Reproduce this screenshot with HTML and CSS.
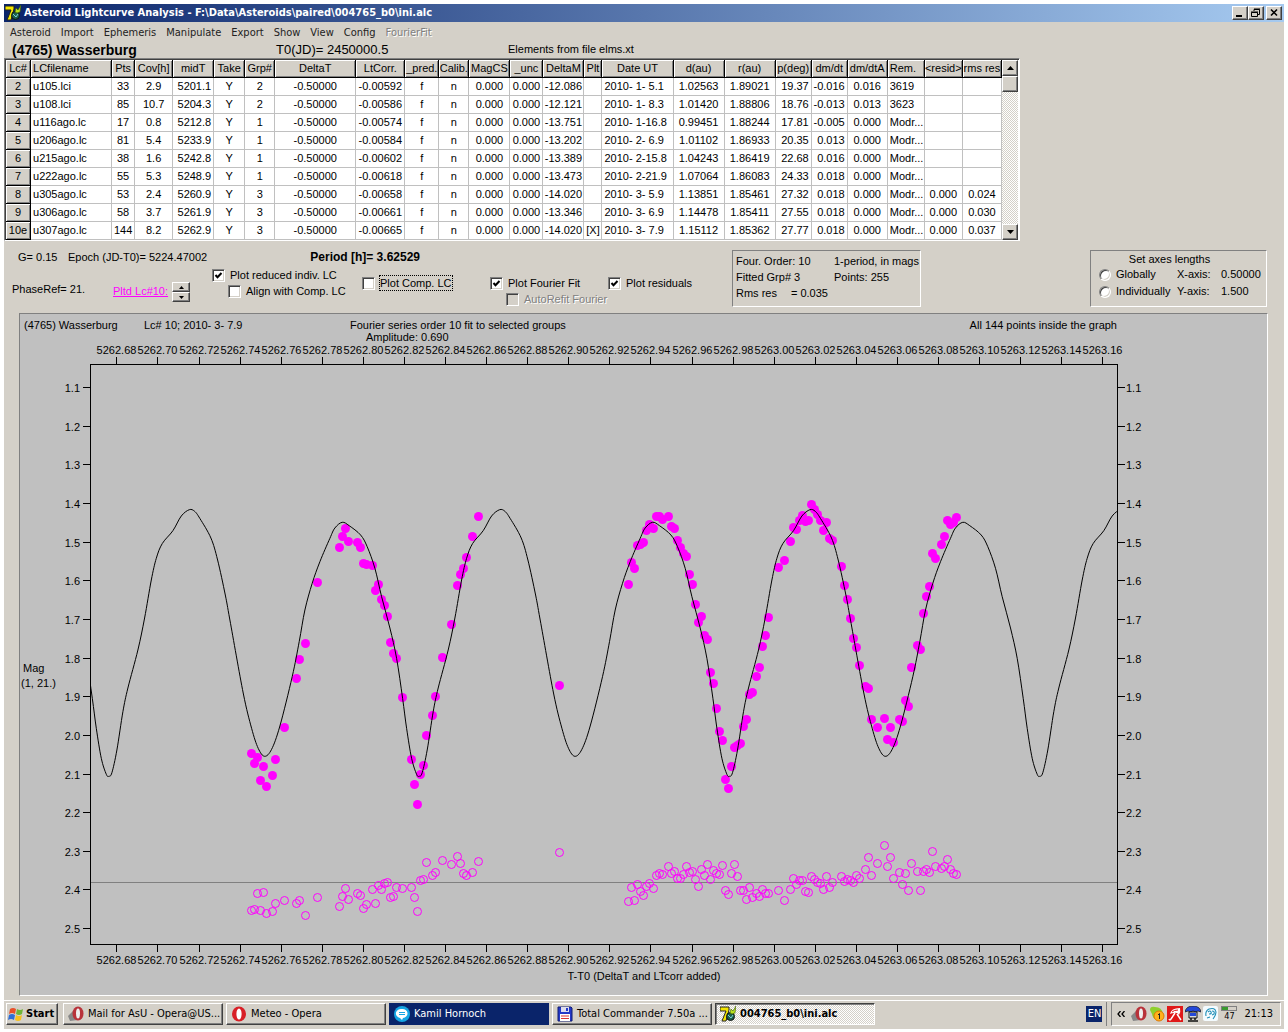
FILE: index.html
```
<!DOCTYPE html>
<html lang="en">
<head>
    <meta charset="UTF-8">
    <meta name="viewport" content="width=device-width, initial-scale=1.0">
    <title>Asteroid Lightcurve Analysis</title>
    <link rel="stylesheet" href="styles.css">
</head>
<body>
    <!-- Shared icons -->
    <svg class="defs" width="0" height="0">
        <symbol id="ic-app" viewBox="0 0 16 16">
            <path d="M0 1h9v3L6 15H2L6 5H0z" fill="#f4e600" stroke="#222" stroke-width="1"/>
            <circle cx="10.500" cy="10.500" r="4" fill="#1b5e4b" stroke="#111"/>
            <path d="M8 9l3 3 2-3" fill="none" stroke="#7fd0d8"/>
            <path d="M10 7l1-4 2 2 3-5-1 7-3 1z" fill="#b6e020" stroke="#3a5a00" stroke-width=".6"/>
        </symbol>
        <symbol id="ic-opera" viewBox="0 0 16 16">
            <ellipse cx="8" cy="8" rx="7" ry="7.500" fill="#d81f26"/>
            <ellipse cx="8" cy="8" rx="2.600" ry="5.500" fill="#fff"/>
        </symbol>
        <symbol id="ic-mail" viewBox="0 0 16 16">
            <path d="M0 10l5-5 5 9-8 1z" fill="#888"/>
            <ellipse cx="10" cy="7.500" rx="5.500" ry="7" fill="#b8323a"/>
            <ellipse cx="10" cy="7.500" rx="2" ry="5" fill="#eee"/>
        </symbol>
    </svg>

    <div class="window">
        <header class="titlebar">
            <svg class="icon"><use href="#ic-app"/></svg>
            <h1>Asteroid Lightcurve Analysis - F:\Data\Asteroids\paired\004765_b0\ini.alc</h1>
            <div class="win-buttons">
                <button type="button" aria-label="Minimize"><svg viewBox="0 0 12 10"><path d="M2 8h6" stroke="#000" stroke-width="2"/></svg></button>
                <button type="button" aria-label="Restore"><svg viewBox="0 0 12 10"><path d="M4 3V1.500h5.500v5H8M4 1h6M1.500 4.500h6v4h-6zM1 4h7" fill="none" stroke="#000"/></svg></button>
                <button type="button" class="close" aria-label="Close"><svg viewBox="0 0 12 10"><path d="M3 1.500l6 6M9 1.500l-6 6" stroke="#000" stroke-width="1.600"/></svg></button>
            </div>
        </header>

        <nav class="menu">
            <button type="button">Asteroid</button>
            <button type="button">Import</button>
            <button type="button">Ephemeris</button>
            <button type="button">Manipulate</button>
            <button type="button">Export</button>
            <button type="button">Show</button>
            <button type="button">View</button>
            <button type="button">Config</button>
            <button type="button" disabled>FourierFit</button>
        </nav>

        <div class="info">
            <b>(4765) Wasserburg</b>
            <span class="epoch">T0(JD)= 2450000.5</span>
            <span class="elements">Elements from file elms.xt</span>
        </div>

        <div class="grid">
            <table id="lc-table">
                <colgroup>
                    <col class="w25"><col class="w81"><col class="w23"><col class="w38"><col class="w41"><col class="w31">
                    <col class="w30"><col class="w81"><col class="w49"><col class="w34"><col class="w30"><col class="w41">
                    <col class="w33"><col class="w41"><col class="w18"><col class="w71"><col class="w51"><col class="w51">
                    <col class="w36"><col class="w36"><col class="w40"><col class="w37"><col class="w38"><col class="w39">
                </colgroup>
                <thead>
                    <tr><th>Lc#</th><th class="left">LCfilename</th><th>Pts</th><th>Cov[h]</th><th>midT</th><th>Take</th><th>Grp#</th><th>DeltaT</th><th>LtCorr.</th><th>_pred.</th><th>Calib.</th><th>MagCS</th><th>_unc</th><th>DeltaM</th><th>Plt</th><th>Date UT</th><th>d(au)</th><th>r(au)</th><th>p(deg)</th><th>dm/dt</th><th>dm/dtA</th><th class="left">Rem.</th><th>&lt;resid&gt;</th><th>rms res</th></tr>
                </thead>
                <tbody></tbody>
            </table>
            <div class="scroll">
                <button type="button" aria-label="Scroll up"><svg viewBox="0 0 7 4"><path d="M0 4l3.500-4L7 4z"/></svg></button>
                <div class="thumb"></div>
                <button type="button" class="down" aria-label="Scroll down"><svg viewBox="0 0 7 4"><path d="M0 0l3.500 4L7 0z"/></svg></button>
            </div>
        </div>

        <form class="controls">
            <div class="params">
                <div class="line">
                    <span class="g">G= 0.15</span>
                    <span>Epoch (JD-T0)= 5224.47002</span>
                    <b>Period [h]= 3.62529</b>
                </div>
                <div class="line options">
                    <span class="phase">PhaseRef= 21.</span>
                    <a href="#chart" class="plotted">Pltd Lc#10:</a>
                    <div class="spin">
                        <button type="button" aria-label="Next"><svg viewBox="0 0 5 3"><path d="M0 3l2.500-3L5 3z"/></svg></button>
                        <button type="button" aria-label="Previous"><svg viewBox="0 0 5 3"><path d="M0 0l2.500 3L5 0z"/></svg></button>
                    </div>
                    <div class="checks">
                        <label><input type="checkbox" checked>Plot reduced indiv. LC</label>
                        <label class="sub"><input type="checkbox">Align with Comp. LC</label>
                    </div>
                    <div class="checks low">
                        <label><input type="checkbox"><span class="focused">Plot Comp. LC</span></label>
                    </div>
                </div>
            </div>
            <div class="checks fit">
                <label><input type="checkbox" checked>Plot Fourier Fit</label>
                <label class="sub off"><input type="checkbox" disabled>AutoRefit Fourier</label>
            </div>
            <div class="checks fit">
                <label><input type="checkbox" checked>Plot residuals</label>
            </div>
            <div class="box fourier">
                <span>Four. Order: 10</span><span>1-period, in mags</span>
                <span>Fitted Grp# 3</span><span>Points: 255</span>
                <span class="rms"><span>Rms res</span><span>= 0.035</span></span>
            </div>
            <fieldset class="box axes">
                <div class="caption">Set axes lengths</div>
                <label><input type="radio" name="axes">Globally</label><span>X-axis:</span><span>0.50000</span>
                <label><input type="radio" name="axes">Individually</label><span>Y-axis:</span><span>1.500</span>
            </fieldset>
        </form>

        <main class="chart">
            <svg id="chart" viewBox="20 314 1247 681">
                <text x="24" y="329">(4765) Wasserburg</text>
                <text x="144" y="329">Lc# 10; 2010- 3- 7.9</text>
                <text x="350" y="329">Fourier series order 10 fit to selected groups</text>
                <text x="366" y="341">Amplitude: 0.690</text>
                <text x="1117" y="329" class="end">All 144 points inside the graph</text>
                <text x="23" y="672">Mag</text>
                <text x="21" y="687">(1, 21.)</text>
                <text x="644" y="980" class="mid">T-T0 (DeltaT and LTcorr added)</text>
                <clipPath id="plot-area"><rect x="91" y="365" width="1026" height="579"/></clipPath>
                <path class="zero" d="M91 882.500H1117"/>
                <rect class="frame" x="90.500" y="364.500" width="1027" height="580"/>
                <g id="ticks"></g>
                <g id="points"></g>
                <path id="curve" clip-path="url(#plot-area)"/>
            </svg>
        </main>

        <footer class="taskbar">
            <button type="button" class="start">
                <svg class="icon" viewBox="0 0 16 16"><path d="M2 3q3-2 6 0L7 8q-3-2-6 0z" fill="#e8502a"/><path d="M9 3q3 2 6 0l-1 5q-3 2-6 0z" fill="#6fb536"/><path d="M1 9q3-2 6 0l-1 5q-3-2-6 0z" fill="#2f6fd6"/><path d="M8 9q3 2 6 0l-1 5q-3 2-6 0z" fill="#f7c11e"/></svg>
                Start
            </button>
            <button type="button" class="task"><svg class="icon"><use href="#ic-mail"/></svg>Mail for AsU - Opera@US...</button>
            <button type="button" class="task"><svg class="icon"><use href="#ic-opera"/></svg>Meteo - Opera</button>
            <button type="button" class="task flash"><svg class="icon" viewBox="0 0 16 16"><circle cx="8" cy="8" r="8" fill="#16a5e3"/><path d="M8 3a5 4.500 0 0 1 1 9l-1 2-2-2a5 4.500 0 0 1 2-9z" fill="#fff"/><path d="M5 6.500h6M5 8.500h6" stroke="#16a5e3"/></svg>Kamil Hornoch</button>
            <button type="button" class="task"><svg class="icon" viewBox="0 0 16 16"><path d="M1 1h13l1 1v13H1z" fill="#2438c8" stroke="#101c70"/><path d="M4 1h8v5H4z" fill="#dde"/><path d="M9 2h2v3H9z" fill="#2438c8"/><path d="M3 8h10v7H3z" fill="#fff"/><path d="M4 10h8M4 12.500h8" stroke="#d33"/></svg>Total Commander 7.50a ...</button>
            <button type="button" class="task active"><svg class="icon"><use href="#ic-app"/></svg>004765_b0\ini.alc</button>
            <span class="lang">EN</span>
            <div class="tray">
                <svg class="arrows" viewBox="0 0 8 6"><path d="M3.500 0L1 3l2.500 3M7.500 0L5 3l2.500 3" fill="none" stroke="#000" stroke-width="1.300"/></svg>
                <svg class="icon"><use href="#ic-mail"/></svg>
                <svg class="icon" viewBox="0 0 16 16"><path d="M1 4q0-4 5-3 7 0 8 7l-2 6q-8 1-9-6z" fill="#8fcf2c"/><circle cx="10" cy="10" r="5" fill="#ffb21c" stroke="#e07800"/><path d="M9 9l1.500-1.500V13" fill="none" stroke="#222"/></svg>
                <svg class="icon" viewBox="0 0 16 16"><path d="M0 0h16v16H0z" fill="#e01818"/><path d="M3 8Q4 2 13 2q1 4-1 7-2-3-5-2-2 0-4 1z" fill="#fff"/><path d="M5 6q2-2 6-2" fill="none" stroke="#e01818"/><path d="M8 7l-4 6q-1 2-2 0M10 8l4 6" fill="none" stroke="#fff" stroke-width="1.500"/></svg>
                <svg class="icon" viewBox="0 0 16 16"><path d="M0 6q1-6 8-6t8 6l-3-1-2 1-3-1-3 1-2-1z" fill="#2448d8" stroke="#111" stroke-width=".7"/><path d="M4 6h8v6H4z" fill="#ddd" stroke="#111"/><path d="M5 7h6v3H5z" fill="#2448d8"/><path d="M6 12v2M10 12v2M3 15h10" stroke="#111" stroke-width="1.500"/></svg>
                <svg class="icon" viewBox="0 0 16 16"><rect width="15" height="15" rx="2" fill="#f4fbfe"/><path d="M3 10q-1-5 3-7 6-2 7 3 0 3-3 7M5 6q2-2 3 0t-2 2M9 5q3 0 2 3l-2 1M4 12l3-1" fill="none" stroke="#2290b8" stroke-width="1.100"/></svg>
                <div class="meter"><meter min="0" max="100" value="45" aria-label="Level"></meter><span>47</span></div>
                <time>21:13</time>
            </div>
        </footer>
    </div>

    <script>
    // Lightcurve list, cells separated by |
    const rows = [
        "2|u105.lci|33|2.9|5201.1|Y|2|-0.50000|-0.00592|f|n|0.000|0.000|-12.086||2010- 1- 5.1|1.02563|1.89021|19.37|-0.016|0.016|3619||",
        "3|u108.lci|85|10.7|5204.3|Y|2|-0.50000|-0.00586|f|n|0.000|0.000|-12.121||2010- 1- 8.3|1.01420|1.88806|18.76|-0.013|0.013|3623||",
        "4|u116ago.lc|17|0.8|5212.8|Y|1|-0.50000|-0.00574|f|n|0.000|0.000|-13.751||2010- 1-16.8|0.99451|1.88244|17.81|-0.005|0.000|Modr...||",
        "5|u206ago.lc|81|5.4|5233.9|Y|1|-0.50000|-0.00584|f|n|0.000|0.000|-13.202||2010- 2- 6.9|1.01102|1.86933|20.35|0.013|0.000|Modr...||",
        "6|u215ago.lc|38|1.6|5242.8|Y|1|-0.50000|-0.00602|f|n|0.000|0.000|-13.389||2010- 2-15.8|1.04243|1.86419|22.68|0.016|0.000|Modr...||",
        "7|u222ago.lc|55|5.3|5248.9|Y|1|-0.50000|-0.00618|f|n|0.000|0.000|-13.473||2010- 2-21.9|1.07064|1.86083|24.33|0.018|0.000|Modr...||",
        "8|u305ago.lc|53|2.4|5260.9|Y|3|-0.50000|-0.00658|f|n|0.000|0.000|-14.020||2010- 3- 5.9|1.13851|1.85461|27.32|0.018|0.000|Modr...|0.000|0.024",
        "9|u306ago.lc|58|3.7|5261.9|Y|3|-0.50000|-0.00661|f|n|0.000|0.000|-13.346||2010- 3- 6.9|1.14478|1.85411|27.55|0.018|0.000|Modr...|0.000|0.030",
        "10e|u307ago.lc|144|8.2|5262.9|Y|3|-0.50000|-0.00665|f|n|0.000|0.000|-14.020|[X]|2010- 3- 7.9|1.15112|1.85362|27.77|0.018|0.000|Modr...|0.000|0.037"
    ];
    const leftCols = [1, 15, 21];
    const rightCols = [4, 18, 19];
    const tbody = document.querySelector('#lc-table tbody');
    rows.forEach(row => {
        const tr = tbody.insertRow();
        row.split('|').forEach((value, i) => {
            const cell = document.createElement(i === 0 ? 'th' : 'td');
            cell.textContent = value;
            if (leftCols.includes(i)) cell.className = 'left';
            if (rightCols.includes(i)) cell.className = 'right';
            tr.appendChild(cell);
        });
    });

    // SVG helper
    function add(parent, name, attrs, text) {
        const el = document.createElementNS('http://www.w3.org/2000/svg', name);
        for (const key in attrs) el.setAttribute(key, attrs[key]);
        if (text) el.textContent = text;
        parent.appendChild(el);
    }

    // Axis ticks and labels
    const ticks = document.getElementById('ticks');
    for (let i = 0; i <= 24; i++) {
        const x = Math.round(116.4 + i * 41.08) + 0.5;
        const label = (5262.68 + i * 0.02).toFixed(2);
        add(ticks, 'path', { d: `M${x} 357V364M${x} 945V952` });
        add(ticks, 'text', { x: x, y: 354, class: 'mid' }, label);
        add(ticks, 'text', { x: x, y: 964, class: 'mid' }, label);
    }
    for (let i = 0; i <= 14; i++) {
        const y = Math.round(387 + i * 38.65) + 0.5;
        const label = (1.1 + i * 0.1).toFixed(1);
        add(ticks, 'path', { d: `M83 ${y}H90M1118 ${y}H1125` });
        add(ticks, 'text', { x: 80, y: y + 4, class: 'end' }, label);
        add(ticks, 'text', { x: 1126, y: y + 4 }, label);
    }

    // Measurements: x, magnitude, residual
    const data = [
        [251,753,910],[254,763,909],[257,757,893],[260,780,910],[263,766,892],[266,786,913],[272,775,911],[275,759,903],
        [284,727,900],[296,678,903],[299,659,900],[305,643,915],[317,582,897],[339,547,906],[342,536,896],[345,528,888],
        [348,541,899],[357,542,893],[360,547,895],[363,563,908],[366,564,904],[372,565,889],[375,590,903],[378,584,885],
        [381,599,889],[384,605,883],[387,616,882],[390,642,897],[393,653,896],[396,658,887],[402,697,888],[411,759,887],
        [414,784,897],[417,804,911],[420,774,880],[423,765,879],[426,735,862],[432,715,875],[435,696,872],[442,657,860],
        [451,624,864],[457,585,856],[460,574,863],[463,568,873],[466,557,875],[472,536,872],[478,516,861],[559,685,852],
        [628,584,901],[631,562,887],[634,568,900],[637,545,884],[640,544,891],[643,542,895],[646,530,886],[649,524,883],
        [653,528,888],[656,516,875],[659,516,873],[662,519,874],[668,516,866],[671,526,873],[674,528,871],[677,540,878],
        [680,547,878],[683,553,874],[686,556,866],[689,574,872],[692,584,871],[695,604,879],[698,622,886],[701,616,869],
        [704,635,875],[707,639,864],[710,672,879],[713,683,870],[716,708,873],[719,731,874],[722,740,865],[725,779,890],
        [728,788,894],[731,766,873],[734,747,864],[737,745,876],[740,743,890],[743,726,890],[746,719,899],[749,694,887],
        [752,692,897],[756,676,893],[759,667,896],[762,646,889],[765,635,893],[768,617,893],[778,567,890],[784,560,900],
        [790,541,889],[793,527,878],[796,529,884],[799,520,880],[802,515,880],[805,521,891],[808,520,892],[811,504,876],
        [814,509,879],[817,514,882],[820,520,883],[823,530,889],[826,522,876],[829,538,887],[832,540,882],[841,566,876],
        [844,585,881],[847,599,879],[850,618,880],[853,638,882],[856,647,875],[859,665,878],[865,686,869],[868,688,857],
        [871,719,875],[877,727,863],[884,718,845],[887,739,866],[890,727,857],[893,742,878],[899,719,872],[902,721,884],
        [905,700,873],[908,706,890],[911,667,863],[917,645,871],[920,649,890],[923,613,871],[926,596,869],[929,586,872],
        [932,553,851],[935,558,866],[941,544,868],[944,536,866],[947,520,859],[950,524,869],[953,522,873],[956,517,874]
    ];
    const points = document.getElementById('points');
    data.forEach(([x, mag, res]) => {
        add(points, 'circle', { cx: x + 0.5, cy: mag + 0.5, r: 4.5, class: 'obs' });
        add(points, 'circle', { cx: x + 0.5, cy: res + 0.5, r: 4, class: 'res' });
    });

    // One period of the fitted curve, repeated over the whole plot
    const period = 310.3;
    const shape = [
        [0,776.3],[3,772.7],[8,750],[14,711.7],[19,688],[29,650],[35.7,618],[42.4,580],[47.4,558.3],[53.4,543.5],[64,530.7],
        [72.4,516],[80.4,509.7],[85.7,511.3],[91,518.5],[102,538],[108.7,560],[116.4,595],[121,620],[134.3,693],[142.7,728.3],
        [149.3,748.3],[155.7,756.3],[162.7,749.3],[171,726],[183.3,676.7],[190.3,641.7],[196,610],[203.3,583.3],[211,561.7],
        [221,538.3],[226,528],[233.3,522.3],[240.3,525.7],[251.7,535],[258.3,546.7],[266,568.3],[272.7,596.7],[281,628],
        [287.7,658.3],[293.7,698.3],[297.7,728.3],[302.7,758.3],[307.7,774.3]
    ];
    const pts = [];
    for (let n = -1; n < 4; n++) {
        shape.forEach(([x, y]) => pts.push([108.9 + n * period + x, y]));
    }
    let d = `M${pts[1]}`;
    for (let i = 1; i < pts.length - 2; i++) {
        const [a, b, c, e] = pts.slice(i - 1, i + 3);
        d += `C${b[0] + (c[0] - a[0]) / 6},${b[1] + (c[1] - a[1]) / 6} ${c[0] - (e[0] - b[0]) / 6},${c[1] - (e[1] - b[1]) / 6} ${c}`;
    }
    document.getElementById('curve').setAttribute('d', d);
    </script>
</body>
</html>
```
FILE: styles.css
```
* {
    box-sizing: border-box;
}
body {
    margin: 0;
    padding: 4px;
    background-color: #fff;
    color: #000;
    font: 11px/14px "Liberation Sans", Arial, sans-serif;
}
button {
    font: inherit;
    color: inherit;
    padding: 0;
    border: none;
    background-color: #d4d0c8;
}
.defs {
    display: block;
    width: 0;
    height: 0;
}
.window {
    background-color: #d4d0c8;
    white-space: nowrap;
}
.icon {
    width: 16px;
    height: 16px;
    flex: none;
}

/* Title bar */
.titlebar {
    display: flex;
    align-items: center;
    gap: 3px;
    height: 18px;
    padding: 0 2px 0 1px;
    background: linear-gradient(to right, #0a246a, #a6caf0);
}
.titlebar h1 {
    flex: 1;
    margin: 0;
    color: #fff;
    font: bold 11px/18px "DejaVu Sans Condensed", Tahoma, sans-serif;
}
.win-buttons {
    display: flex;
}
.win-buttons button,
.scroll button,
.thumb,
.spin button {
    display: flex;
    align-items: center;
    justify-content: center;
    background-color: #d4d0c8;
    border: 1px solid;
    border-color: #fff #404040 #404040 #fff;
    box-shadow: inset -1px -1px #808080;
}
.win-buttons button {
    width: 16px;
    height: 14px;
}
.win-buttons svg {
    width: 12px;
    height: 10px;
}
.win-buttons .close {
    margin-left: 2px;
}

/* Menu */
.menu {
    display: flex;
    gap: 10px;
    height: 20px;
    padding: 1px 0 0 6px;
    font: 11px/20px "DejaVu Sans Condensed", Tahoma, sans-serif;
    color: #222;
}
.menu button:disabled {
    color: #808080;
    text-shadow: 1px 1px #fff;
}
.info {
    display: flex;
    height: 16px;
    padding-left: 8px;
    font-size: 13px;
    line-height: 16px;
}
.info b {
    width: 264px;
    font-size: 14px;
}
.info .epoch {
    width: 232px;
}
.info .elements {
    font-size: 11px;
    line-height: 14px;
}

/* Lightcurve table */
.grid {
    display: flex;
    width: max-content;
    border: 1px solid;
    border-color: #808080 #fff #fff #808080;
    box-shadow: inset 1px 1px #404040;
    padding: 1px 1px 0 1px;
    background-color: #fff;
}
#lc-table {
    width: 996px;
    table-layout: fixed;
    border-collapse: separate;
    border-spacing: 0;
}
#lc-table th,
#lc-table td {
    height: 18px;
    padding: 0;
    line-height: 17px;
    text-align: center;
    font-weight: normal;
    white-space: pre;
    border-right: 1px solid #c0c0c0;
    border-bottom: 1px solid #c0c0c0;
}
#lc-table th {
    background-color: #d4d0c8;
    border-color: #000;
    box-shadow: inset 1px 1px #fff, inset -1px -1px #808080;
}
#lc-table .left {
    text-align: left;
    padding-left: 2px;
}
#lc-table .right {
    text-align: right;
    padding-right: 2px;
}
.w18 { width: 18px; }
.w23 { width: 23px; }
.w25 { width: 25px; }
.w30 { width: 30px; }
.w31 { width: 31px; }
.w33 { width: 33px; }
.w34 { width: 34px; }
.w36 { width: 36px; }
.w37 { width: 37px; }
.w38 { width: 38px; }
.w39 { width: 39px; }
.w40 { width: 40px; }
.w41 { width: 41px; }
.w49 { width: 49px; }
.w51 { width: 51px; }
.w71 { width: 71px; }
.w81 { width: 81px; }
.scroll {
    display: flex;
    flex-direction: column;
    width: 16px;
    background: repeating-conic-gradient(#fff 0 25%, #d4d0c8 0 50%) 0 0 / 2px 2px;
}
.scroll button,
.thumb {
    height: 16px;
}
.scroll svg {
    width: 7px;
    height: 4px;
}
.scroll .down {
    margin-top: auto;
}

/* Plot controls */
.controls {
    display: flex;
    align-items: flex-start;
    padding: 9px 17px 6px 8px;
}
.params {
    width: 478px;
}
.line {
    display: flex;
}
.line .g {
    width: 56px;
    padding-left: 6px;
}
.line b {
    margin-left: auto;
    margin-right: 70px;
    font-size: 12px;
}
.options {
    padding-top: 4px;
}
.phase {
    width: 101px;
    padding-top: 14px;
}
.plotted {
    width: 59px;
    padding-top: 16px;
    color: #f0f;
}
.spin {
    width: 40px;
    padding-top: 14px;
}
.spin button {
    width: 18px;
    height: 10px;
}
.spin svg {
    width: 5px;
    height: 3px;
}
.checks {
    display: flex;
    flex-direction: column;
    gap: 2px;
    width: 150px;
}
.checks label,
.axes label {
    display: flex;
    align-items: center;
    gap: 5px;
}
.checks .sub {
    padding-left: 16px;
}
.checks.low {
    width: auto;
    padding-top: 8px;
}
.checks.fit {
    width: 118px;
    padding-top: 26px;
}
.checks.fit + .checks.fit {
    width: 124px;
}
.off {
    color: #808080;
    text-shadow: 1px 1px #fff;
}
.focused {
    outline: 1px dotted #000;
}
input[type="checkbox"],
input[type="radio"] {
    appearance: none;
    width: 13px;
    height: 13px;
    margin: 0;
    background-color: #fff;
    border: 1px solid;
    border-color: #808080 #fff #fff #808080;
    box-shadow: inset 1px 1px #404040, inset -1px -1px #d4d0c8;
}
input[type="radio"] {
    width: 12px;
    height: 12px;
    border-radius: 50%;
}
input[type="checkbox"]:checked {
    background: #fff url('data:image/svg+xml,<svg xmlns="http://www.w3.org/2000/svg" viewBox="0 0 11 11"><path d="M2.500 5l2 2.300 4-4.300" fill="none" stroke="black" stroke-width="2"/></svg>') center / 11px 11px no-repeat;
}
input[type="checkbox"]:disabled {
    background-color: #d4d0c8;
}
.box {
    margin: 0;
    height: 57px;
    border: 1px solid;
    border-color: #808080 #fff #fff #808080;
}
.fourier {
    display: grid;
    grid-template-columns: 98px 1fr;
    grid-auto-rows: 16px;
    width: 189px;
    padding: 3px;
}
.rms {
    display: flex;
    gap: 14px;
}
.axes {
    display: grid;
    grid-template: 14px 17px 17px / 78px 44px 1fr;
    width: 177px;
    margin-left: auto;
    padding: 1px 0 0 8px;
}
.axes .caption {
    grid-column: 1 / -1;
    text-align: center;
    padding-right: 26px;
}
.axes label,
.axes span {
    line-height: 17px;
}

/* Chart */
.chart {
    margin: 0 16px 4px 15px;
    border: 1px solid;
    border-color: #808080 #fff #fff #808080;
    background-color: #c0c0c0;
}
.chart svg {
    display: block;
    width: 100%;
}
.chart text {
    font-size: 11px;
}
.chart .mid {
    text-anchor: middle;
}
.chart .end {
    text-anchor: end;
}
.frame,
#ticks path,
#curve {
    fill: none;
    stroke: #000;
}
.frame,
#ticks path,
.zero {
    shape-rendering: crispEdges;
}
.zero {
    stroke: #808080;
}
.obs {
    fill: #f0f;
}
.res {
    fill: none;
    stroke: #f0f;
}

/* Taskbar */
.taskbar {
    display: flex;
    align-items: center;
    gap: 3px;
    height: 29px;
    padding: 0 3px 2px 2px;
    border-top: 1px solid #fff;
    font: 11px/16px "DejaVu Sans Condensed", Tahoma, sans-serif;
}
.start,
.task {
    display: flex;
    align-items: center;
    gap: 4px;
    width: 160px;
    height: 22px;
    padding: 0 4px;
    overflow: hidden;
    border: 1px solid;
    border-color: #fff #404040 #404040 #fff;
    box-shadow: inset -1px -1px #808080;
}
.start {
    width: 52px;
    padding: 0 1px;
    gap: 2px;
    margin-right: 2px;
    font-weight: bold;
}
.flash {
    background-color: #0a246a;
    border-color: #0a246a;
    box-shadow: none;
    color: #fff;
}
.active {
    background: repeating-conic-gradient(#fff 0 25%, #d4d0c8 0 50%) 0 0 / 2px 2px;
    border-color: #404040 #fff #fff #404040;
    box-shadow: inset 1px 1px #808080;
    font-weight: bold;
}
.lang {
    width: 16px;
    margin-left: auto;
    background-color: #0a246a;
    color: #fff;
    text-align: center;
}
.tray {
    display: flex;
    align-items: center;
    gap: 2px;
    height: 24px;
    margin-left: 6px;
    padding: 0 7px 0 5px;
    border: 1px solid;
    border-color: #808080 #fff #fff #808080;
    box-shadow: -4px 0 #d4d0c8, -5px 0 #808080;
}
.arrows {
    width: 8px;
    height: 6px;
    margin-right: 4px;
}
.meter {
    display: flex;
    flex-direction: column;
    align-items: center;
    width: 16px;
    font-size: 9px;
    line-height: 11px;
}
.meter meter {
    appearance: none;
    display: block;
    width: 16px;
    height: 5px;
    border: 1px solid #808080;
    background: linear-gradient(to right, #3a9a30 45%, #d4d0c8 45%);
}
.meter meter::-webkit-meter-inner-element {
    display: none;
}
.tray time {
    margin-left: 5px;
}
```
